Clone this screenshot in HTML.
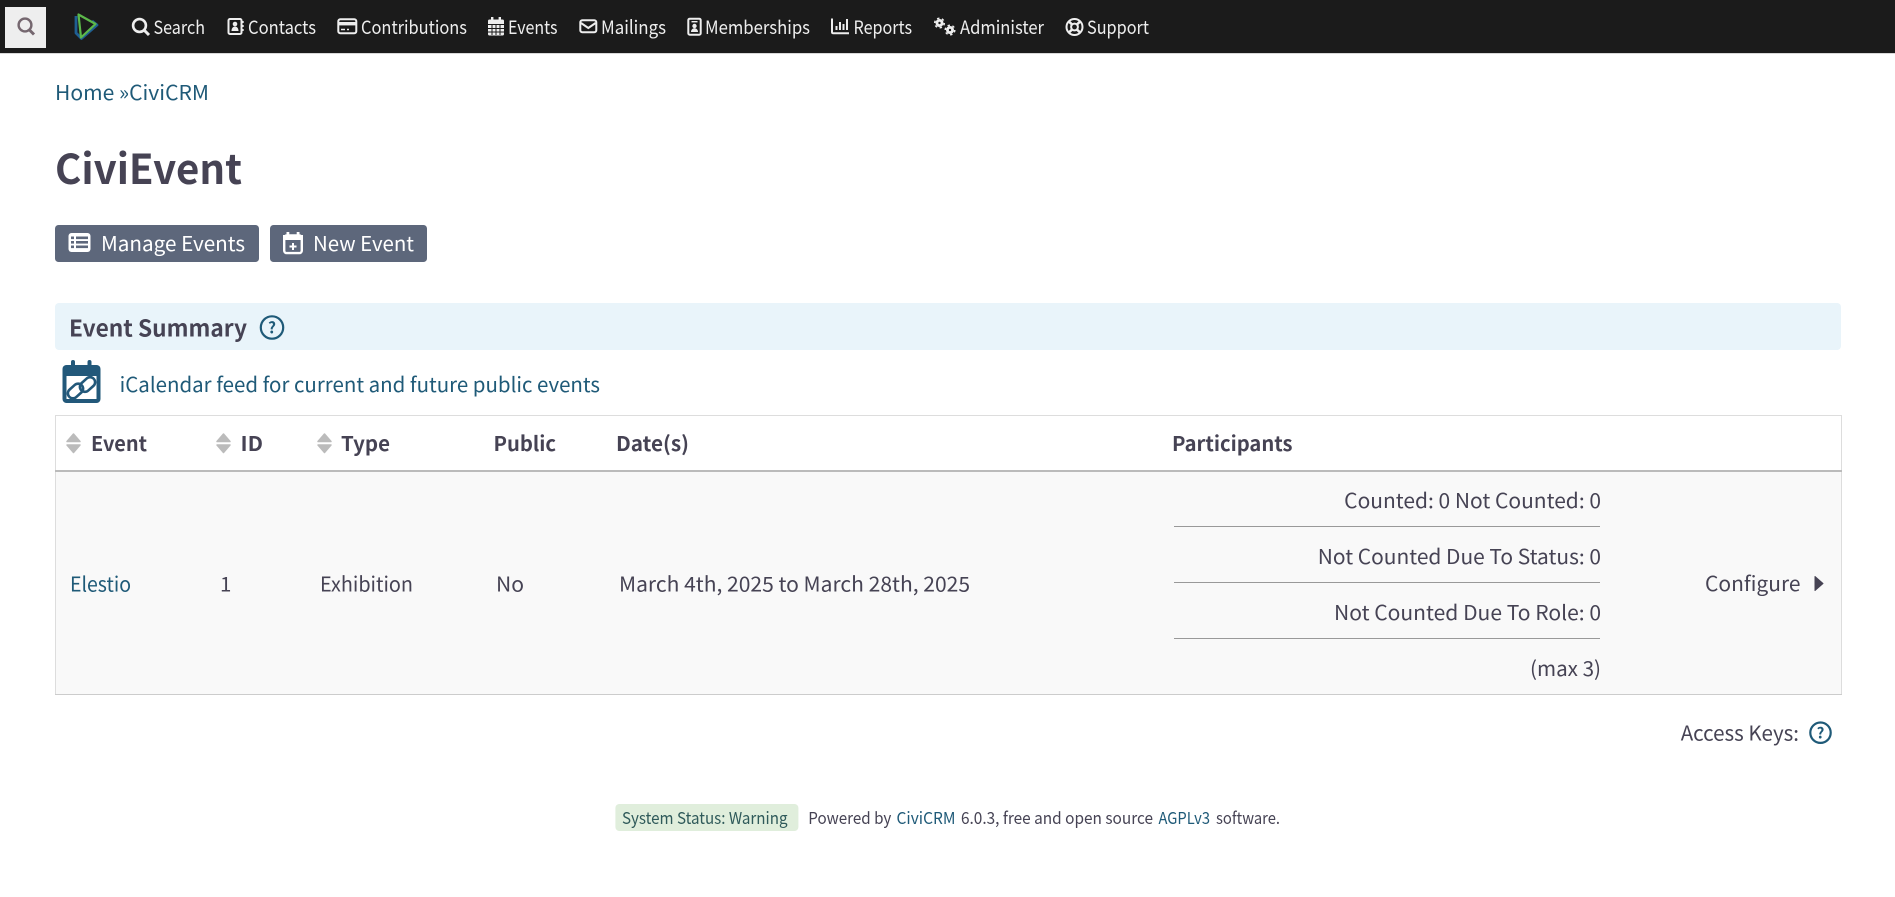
<!DOCTYPE html>
<html lang="en"><head><meta charset="utf-8"><title>CiviEvent</title>
<style>
html,body{margin:0;padding:0;background:#fff;width:1895px;height:897px;overflow:hidden}
svg{display:block}
text{font-family:"Noto Sans CJK SC","Liberation Sans",sans-serif;white-space:pre}
.n{font-size:18.5px;fill:#eeeeee}
.l{font-size:20.5px;fill:#1f5a78}
.d{font-size:20.5px;fill:#464354}
.h{font-size:20.5px;font-weight:700;fill:#464354}
.b{font-size:20.5px;fill:#fff}
.f{font-size:16.5px;fill:#464354}
.fl{font-size:16.5px;fill:#1f5a78}
</style></head><body>
<svg width="1895" height="897" viewBox="0 0 1895 897" xmlns="http://www.w3.org/2000/svg">
<rect width="1895" height="897" fill="#fff"/>
<!-- nav -->
<rect width="1895" height="53" fill="#1b1b1b"/>
<rect y="53" width="1895" height="1" fill="#d8d8d8"/>
<rect x="5" y="7" width="41" height="41" fill="#eeeeee"/>
<g fill="none" stroke="#75676f" stroke-width="2.4"><circle cx="25" cy="25" r="6.4"/><path d="M29.500 30l4.500 4.500" stroke-width="3"/></g>
<g fill="none" stroke-linejoin="round">
<path d="M76 16v17l5.500 5.500L97 25l-5-4" stroke="#1f5f93" stroke-width="2.800"/>
<path d="M78.500 14.500L95.500 24 81 37.500z" stroke="#5cb84a" stroke-width="2.200"/>
</g>
<g fill="none" stroke="#eee" stroke-width="2.600"><circle cx="139.500" cy="25.500" r="6.400"/><path d="M144 30l5 5" stroke-width="3"/></g>
<text class="n" x="153.500" y="34" textLength="51.500" lengthAdjust="spacingAndGlyphs">Search</text>
<g><rect x="228.500" y="19" width="13" height="15" rx="1.500" fill="none" stroke="#eee" stroke-width="2"/><circle cx="235" cy="24" r="2.300" fill="#eee"/><path d="M231.500 31c0-6 7-6 7 0z" fill="#eee"/><path d="M243 21v2M243 25v2M243 29v2" stroke="#eee" stroke-width="1.400"/></g>
<text class="n" x="248" y="34" textLength="68" lengthAdjust="spacingAndGlyphs">Contacts</text>
<g><rect x="338.300" y="19.300" width="18" height="14" rx="2" fill="none" stroke="#eee" stroke-width="2"/><rect x="338" y="22" width="19" height="3.400" fill="#eee"/><path d="M341 29.500h4M347 29.500h2" stroke="#eee" stroke-width="1.600"/></g>
<text class="n" x="361" y="34" textLength="106" lengthAdjust="spacingAndGlyphs">Contributions</text>
<g><rect x="488" y="19.500" width="16" height="16" rx="1.500" fill="#eee"/><rect x="491" y="17" width="2.400" height="4" fill="#eee"/><rect x="498.600" y="17" width="2.400" height="4" fill="#eee"/><path d="M488 24.500h16M488 28.500h16M488 32h16M492 24v11M496 24v11M500 24v11" stroke="#1b1b1b" stroke-width="1"/></g>
<text class="n" x="508" y="34" textLength="49.500" lengthAdjust="spacingAndGlyphs">Events</text>
<g fill="none" stroke="#eee" stroke-width="2"><rect x="580.300" y="20.300" width="16" height="12" rx="2"/><path d="M581 23l7.300 5 7.300-5"/></g>
<text class="n" x="601" y="34" textLength="65" lengthAdjust="spacingAndGlyphs">Mailings</text>
<g><rect x="688.300" y="18.700" width="12.400" height="16" rx="1.500" fill="none" stroke="#eee" stroke-width="2"/><rect x="691.500" y="21" width="6" height="1.400" fill="#eee"/><circle cx="694.500" cy="26" r="2.200" fill="#eee"/><path d="M691 32c0-5 7-5 7 0z" fill="#eee"/></g>
<text class="n" x="705" y="34" textLength="105" lengthAdjust="spacingAndGlyphs">Memberships</text>
<g><path d="M832 18.500v13.500q0 1.300 1.300 1.300H849" fill="none" stroke="#eee" stroke-width="2"/><path d="M836.500 26v4M840 22v8M843.500 24v6M847 19v11" stroke="#eee" stroke-width="2"/></g>
<text class="n" x="853.500" y="34" textLength="58.500" lengthAdjust="spacingAndGlyphs">Reports</text>
<g fill="none" stroke="#eee"><circle cx="939.500" cy="23" r="2.600" stroke-width="2.800"/><circle cx="939.500" cy="23" r="4.800" stroke-width="1.500" stroke-dasharray="2.400 2.600"/><circle cx="950" cy="30" r="2.600" stroke-width="2.800"/><circle cx="950" cy="30" r="4.800" stroke-width="1.500" stroke-dasharray="2.400 2.600"/></g>
<text class="n" x="960" y="34" textLength="84" lengthAdjust="spacingAndGlyphs">Administer</text>
<g fill="none" stroke="#eee"><circle cx="1074.500" cy="27" r="8" stroke-width="2"/><circle cx="1074.500" cy="27" r="3.400" stroke-width="2"/><path d="M1069 21.500l3 3M1080 21.500l-3 3M1069 32.500l3-3M1080 32.500l-3-3" stroke-width="2.600"/></g>
<text class="n" x="1087" y="34" textLength="62" lengthAdjust="spacingAndGlyphs">Support</text>
<!-- breadcrumb -->
<text class="l" x="55" y="100" textLength="154" lengthAdjust="spacingAndGlyphs">Home »CiviCRM</text>
<!-- title -->
<text x="55" y="184" textLength="187" lengthAdjust="spacingAndGlyphs" style="font-size:41px;font-weight:700;fill:#464354">CiviEvent</text>
<!-- buttons -->
<rect x="55" y="225" width="204" height="37" rx="3.500" fill="#5d677b"/>
<rect x="270" y="225" width="157" height="37" rx="3.500" fill="#5d677b"/>
<g><rect x="68.500" y="233" width="22" height="19" rx="3" fill="#fff"/><g fill="#5d677b"><rect x="71" y="236.500" width="3" height="2.600"/><rect x="71" y="241" width="3" height="2.600"/><rect x="71" y="245.500" width="3" height="2.600"/><rect x="76" y="236.500" width="12" height="2.600"/><rect x="76" y="241" width="12" height="2.600"/><rect x="76" y="245.500" width="12" height="2.600"/></g></g>
<text class="b" x="101" y="251" textLength="144" lengthAdjust="spacingAndGlyphs">Manage Events</text>
<g><rect x="284.200" y="235.500" width="17.600" height="17.600" rx="2.500" fill="none" stroke="#fff" stroke-width="2.400"/><rect x="283" y="235" width="20" height="5" fill="#fff"/><rect x="286.500" y="232" width="2.800" height="4" fill="#fff"/><rect x="296.700" y="232" width="2.800" height="4" fill="#fff"/><path d="M293 243v7M289.500 246.500h7" stroke="#fff" stroke-width="2"/></g>
<text class="b" x="313" y="251" textLength="101" lengthAdjust="spacingAndGlyphs">New Event</text>
<!-- section header -->
<rect x="55" y="303" width="1786" height="47" rx="4" fill="#e9f4fa"/>
<text x="69" y="336.500" textLength="178" lengthAdjust="spacingAndGlyphs" style="font-size:23px;font-weight:700;fill:#464354">Event Summary</text>
<circle cx="272" cy="327.500" r="11.200" fill="none" stroke="#1f5a78" stroke-width="2.200"/>
<text x="272" y="333.500" text-anchor="middle" style="font-size:15.500px;font-weight:700;fill:#1f5a78">?</text>
<!-- calendar feed -->
<g><rect x="62.500" y="365" width="38" height="38" rx="4" fill="#22587a"/><rect x="71" y="360" width="4" height="8" rx="2" fill="#22587a"/><rect x="87.500" y="360" width="4" height="8" rx="2" fill="#22587a"/><rect x="66.500" y="376" width="30" height="23" fill="#fff"/>
<g fill="none" stroke="#22587a" stroke-width="2.600"><rect x="-8.500" y="-5" width="17" height="10" rx="5" transform="translate(75.500 391) rotate(-42)"/><rect x="-8.500" y="-5" width="17" height="10" rx="5" transform="translate(87.500 384.500) rotate(-42)"/></g></g>
<text class="l" x="119.600" y="392" textLength="480.400" lengthAdjust="spacingAndGlyphs">iCalendar feed for current and future public events</text>
<!-- table -->
<rect x="55.500" y="415.500" width="1786" height="278" fill="#fff" stroke="#dddddd"/>
<rect x="56" y="472" width="1785" height="222" fill="#f9f9f9"/>
<rect x="55" y="470" width="1787" height="2" fill="#bbbbbb"/>
<rect x="55" y="694" width="1787" height="1" fill="#cccccc"/>
<g fill="#bbbbbb" stroke="#bbbbbb" stroke-width="1.500" stroke-linejoin="round">
<path d="M67 441.500l6.500-7.500 6.500 7.500zM67 445l6.500 7.500 6.500-7.500z"/>
<path d="M217 441.500l6.500-7.500 6.500 7.500zM217 445l6.500 7.500 6.500-7.500z"/>
<path d="M318 441.500l6.500-7.500 6.500 7.500zM318 445l6.500 7.500 6.500-7.500z"/>
</g>
<text class="h" x="91" y="451" textLength="56" lengthAdjust="spacingAndGlyphs">Event</text>
<text class="h" x="240.500" y="451" textLength="22.500" lengthAdjust="spacingAndGlyphs">ID</text>
<text class="h" x="341" y="451" textLength="49" lengthAdjust="spacingAndGlyphs">Type</text>
<text class="h" x="493.500" y="451" textLength="62.500" lengthAdjust="spacingAndGlyphs">Public</text>
<text class="h" x="616" y="451" textLength="73" lengthAdjust="spacingAndGlyphs">Date(s)</text>
<text class="h" x="1172" y="451" textLength="120.500" lengthAdjust="spacingAndGlyphs">Participants</text>
<text class="l" x="70" y="591.500" textLength="61" lengthAdjust="spacingAndGlyphs">Elestio</text>
<text class="d" x="220" y="591.500">1</text>
<text class="d" x="320" y="591.500" textLength="93" lengthAdjust="spacingAndGlyphs">Exhibition</text>
<text class="d" x="496" y="591.500" textLength="28" lengthAdjust="spacingAndGlyphs">No</text>
<text class="d" x="619" y="591.500" textLength="351" lengthAdjust="spacingAndGlyphs">March 4th, 2025 to March 28th, 2025</text>
<text class="d" x="1344.200" y="508" textLength="256.800" lengthAdjust="spacingAndGlyphs">Counted: 0 Not Counted: 0</text>
<rect x="1174" y="526" width="426" height="1" fill="#999"/>
<text class="d" x="1317.800" y="564" textLength="283.200" lengthAdjust="spacingAndGlyphs">Not Counted Due To Status: 0</text>
<rect x="1174" y="582" width="426" height="1" fill="#999"/>
<text class="d" x="1334" y="620" textLength="267" lengthAdjust="spacingAndGlyphs">Not Counted Due To Role: 0</text>
<rect x="1174" y="638" width="426" height="1" fill="#999"/>
<text class="d" x="1530" y="676" textLength="71" lengthAdjust="spacingAndGlyphs">(max 3)</text>
<text class="d" x="1705" y="591" textLength="95.500" lengthAdjust="spacingAndGlyphs">Configure</text>
<path d="M1815 576.500l8 7-8 7z" fill="#464354" stroke="#464354" stroke-linejoin="round"/>
<!-- access keys -->
<text class="d" x="1680.700" y="740.500" textLength="118.300" lengthAdjust="spacingAndGlyphs">Access Keys:</text>
<circle cx="1820.500" cy="732.700" r="10.200" fill="none" stroke="#1f5a78" stroke-width="2.200"/>
<text x="1820.500" y="738.500" text-anchor="middle" style="font-size:15px;font-weight:700;fill:#1f5a78">?</text>
<!-- footer -->
<rect x="615.400" y="804" width="183" height="27" rx="4" fill="#e0eedc"/>
<text class="f" x="622" y="824" textLength="165.500" lengthAdjust="spacingAndGlyphs" style="fill:#2f5a5a">System Status: Warning</text>
<text class="f" x="808.300" y="824" textLength="83" lengthAdjust="spacingAndGlyphs">Powered by</text>
<text class="fl" x="896.500" y="824" textLength="59" lengthAdjust="spacingAndGlyphs">CiviCRM</text>
<text class="f" x="961" y="824" textLength="192" lengthAdjust="spacingAndGlyphs">6.0.3, free and open source</text>
<text class="fl" x="1158.500" y="824" textLength="51.500" lengthAdjust="spacingAndGlyphs">AGPLv3</text>
<text class="f" x="1216" y="824" textLength="64" lengthAdjust="spacingAndGlyphs">software.</text>
</svg>
</body></html>
